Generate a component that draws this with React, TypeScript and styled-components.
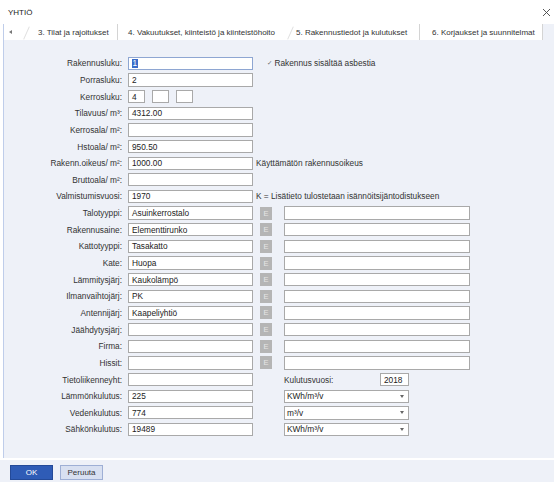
import React from 'react';
import styled, { createGlobalStyle } from 'styled-components';

const Global = createGlobalStyle`
  html, body { margin: 0; padding: 0; background: #ffffff; }
  body { font-family: "Liberation Sans", Arial, sans-serif; }
  #root { width: 554px; height: 482px; }
`;

const Window = styled.div`
  width: 554px;
  height: 482px;
  display: flex;
  flex-direction: column;
  background: #ffffff;
  overflow: hidden;
  font-size: 8.3px;
  color: #333;
  font-family: "Liberation Sans", Arial, sans-serif;
`;

const TitleBar = styled.div`
  height: 24px;
  flex: none;
  box-sizing: border-box;
  display: flex;
  align-items: center;
  justify-content: space-between;
  padding: 0 3px 0 8px;
  color: #222;
  font-size: 8px;
`;

const CloseIcon = styled.svg`
  width: 9px;
  height: 9px;
`;

const Frame = styled.div`
  flex: 1;
  display: flex;
  flex-direction: column;
  margin-left: 3px;
  border-left: 1px solid #bfcdea;
`;

const TabBar = styled.div`
  height: 16px;
  flex: none;
  display: flex;
  background: #eef1f8;
`;

const TabStrip = styled.div`
  display: flex;
  background: #ffffff;
`;

const ScrollArrow = styled.div`
  width: 19px;
  display: flex;
  align-items: center;
  padding-left: 5px;
  box-sizing: border-box;
  &::before {
    content: '';
    width: 0;
    height: 0;
    border-top: 2px solid transparent;
    border-bottom: 2px solid transparent;
    border-right: 3px solid #777;
  }
`;

const Tab = styled.div<{ $w: number; $pad: number; $slant?: boolean; $divider?: boolean }>`
  position: relative;
  width: ${(p) => p.$w}px;
  box-sizing: border-box;
  padding-left: ${(p) => p.$pad}px;
  display: flex;
  align-items: center;
  font-size: 8px;
  color: #333;
  white-space: nowrap;
  border-right: ${(p) => (p.$divider ? '1px solid #d4d4d4' : 'none')};
  &::before {
    content: '';
    display: ${(p) => (p.$slant ? 'block' : 'none')};
    position: absolute;
    left: 3px;
    top: 2px;
    width: 1px;
    height: 14px;
    background: #e0e0e0;
    transform: rotate(24deg);
    transform-origin: center;
  }
`;

const Content = styled.div`
  flex: 1;
  background: #eef1f8;
  padding-top: 16.7px;
  display: flex;
  flex-direction: column;
  gap: 3.35px;
`;

const Row = styled.div`
  display: grid;
  grid-template-columns: 118px 125px 1fr;
  column-gap: 6px;
  height: 13.3px;
  align-items: center;
`;

const Label = styled.div`
  text-align: right;
  white-space: nowrap;
  color: #333;
`;

const Field = styled.div<{ $w?: number; $focus?: boolean }>`
  width: ${(p) => (p.$w ? `${p.$w}px` : '100%')};
  height: 13.3px;
  box-sizing: border-box;
  background: #ffffff;
  border: 1px solid ${(p) => (p.$focus ? '#8ea6d2' : '#a9a9a9')};
  padding: 0 3px;
  display: flex;
  align-items: center;
  color: #222;
  white-space: nowrap;
  overflow: hidden;
`;

const Selected = styled.span`
  background: #3a6cc9;
  color: #ffffff;
  padding: 0 0.5px;
  line-height: 9px;
`;

const BoxGroup = styled.div`
  display: flex;
  gap: 7px;
`;

const Side = styled.div<{ $indent: number }>`
  display: flex;
  align-items: center;
  margin-left: ${(p) => p.$indent}px;
  white-space: nowrap;
  height: 100%;
`;

const CheckMark = styled.span`
  color: #666;
  font-family: "DejaVu Sans", sans-serif;
  font-size: 6.5px;
  margin-right: 2px;
`;

const EButton = styled.div`
  width: 12px;
  height: 13px;
  background: #b5b5b5;
  color: #e6e6e6;
  font-size: 7.5px;
  display: flex;
  align-items: center;
  justify-content: center;
  margin-right: 12px;
  flex: none;
`;

const SideLabel = styled.div`
  width: 96px;
  color: #333;
`;

const Select = styled.div`
  width: 125px;
  height: 13.4px;
  box-sizing: border-box;
  background: #ffffff;
  border: 1px solid #a9a9a9;
  padding: 0 4px 0 2px;
  display: flex;
  align-items: center;
  justify-content: space-between;
  color: #222;
  &::after {
    content: '';
    width: 0;
    height: 0;
    border-left: 2.5px solid transparent;
    border-right: 2.5px solid transparent;
    border-top: 3px solid #666;
  }
`;

const Footer = styled.div`
  height: 24px;
  flex: none;
  box-sizing: border-box;
  background: #eef1f8;
  border-top: 2px solid #ffffff;
  padding: 5px 0 0 10px;
  display: flex;
  gap: 7px;
  align-items: flex-start;
`;

const Button = styled.div<{ $primary?: boolean }>`
  width: 43px;
  height: 15px;
  box-sizing: border-box;
  display: flex;
  align-items: center;
  justify-content: center;
  font-size: 8px;
  background: ${(p) => (p.$primary ? '#2f5cb6' : '#d8e0f1')};
  border: 1px solid ${(p) => (p.$primary ? '#244a98' : '#9eafd5')};
  color: ${(p) => (p.$primary ? '#ffffff' : '#333')};
`;

type Extra =
  | { kind: 'check'; text: string }
  | { kind: 'note'; text: string }
  | { kind: 'e' }
  | { kind: 'year'; label: string; value: string }
  | { kind: 'select'; value: string };

type RowData = {
  label: string;
  value?: string;
  boxes?: string[];
  focus?: boolean;
  extra?: Extra;
};

const rows: RowData[] = [
  { label: 'Rakennusluku:', value: '1', focus: true, extra: { kind: 'check', text: 'Rakennus sisältää asbestia' } },
  { label: 'Porrasluku:', value: '2' },
  { label: 'Kerrosluku:', boxes: ['4', '', ''] },
  { label: 'Tilavuus/ m³:', value: '4312.00' },
  { label: 'Kerrosala/ m²:', value: '' },
  { label: 'Hstoala/ m²:', value: '950.50' },
  { label: 'Rakenn.oikeus/ m²:', value: '1000.00', extra: { kind: 'note', text: 'Käyttämätön rakennusoikeus' } },
  { label: 'Bruttoala/ m²:', value: '' },
  { label: 'Valmistumisvuosi:', value: '1970', extra: { kind: 'note', text: 'K = Lisätieto tulostetaan isännöitsijäntodistukseen' } },
  { label: 'Talotyyppi:', value: 'Asuinkerrostalo', extra: { kind: 'e' } },
  { label: 'Rakennusaine:', value: 'Elementtirunko', extra: { kind: 'e' } },
  { label: 'Kattotyyppi:', value: 'Tasakatto', extra: { kind: 'e' } },
  { label: 'Kate:', value: 'Huopa', extra: { kind: 'e' } },
  { label: 'Lämmitysjärj:', value: 'Kaukolämpö', extra: { kind: 'e' } },
  { label: 'Ilmanvaihtojärj:', value: 'PK', extra: { kind: 'e' } },
  { label: 'Antennijärj:', value: 'Kaapeliyhtiö', extra: { kind: 'e' } },
  { label: 'Jäähdytysjärj:', value: '', extra: { kind: 'e' } },
  { label: 'Firma:', value: '', extra: { kind: 'e' } },
  { label: 'Hissit:', value: '', extra: { kind: 'e' } },
  { label: 'Tietoliikenneyht:', value: '', extra: { kind: 'year', label: 'Kulutusvuosi:', value: '2018' } },
  { label: 'Lämmönkulutus:', value: '225', extra: { kind: 'select', value: 'KWh/m³/v' } },
  { label: 'Vedenkulutus:', value: '774', extra: { kind: 'select', value: 'm³/v' } },
  { label: 'Sähkönkulutus:', value: '19489', extra: { kind: 'select', value: 'KWh/m³/v' } },
];

function renderExtra(extra?: Extra) {
  if (!extra) return <div />;
  switch (extra.kind) {
    case 'check':
      return (
        <Side $indent={8}>
          <CheckMark>✓</CheckMark>
          {extra.text}
        </Side>
      );
    case 'note':
      return <Side $indent={-3}>{extra.text}</Side>;
    case 'e':
      return (
        <Side $indent={1}>
          <EButton>E</EButton>
          <Field $w={186} />
        </Side>
      );
    case 'year':
      return (
        <Side $indent={25}>
          <SideLabel>{extra.label}</SideLabel>
          <Field $w={29}>{extra.value}</Field>
        </Side>
      );
    case 'select':
      return (
        <Side $indent={25}>
          <Select>{extra.value}</Select>
        </Side>
      );
  }
}

const tabs = [
  { text: '3. Tilat ja rajoitukset', w: 95, pad: 15, slant: true, divider: true },
  { text: '4. Vakuutukset, kiinteistö ja kiinteistöhoito', w: 169, pad: 10, slant: false, divider: false },
  { text: '5. Rakennustiedot ja kulutukset', w: 133, pad: 9, slant: true, divider: true },
  { text: '6. Korjaukset ja suunnitelmat', w: 123, pad: 12, slant: false, divider: true },
];

export default function App() {
  return (
    <>
      <Global />
      <Window>
        <TitleBar>
          <span>YHTIÖ</span>
          <CloseIcon viewBox="0 0 9 9">
            <path d="M1 1 L8 8 M8 1 L1 8" stroke="#444" strokeWidth="0.9" fill="none" />
          </CloseIcon>
        </TitleBar>
        <Frame>
          <TabBar>
            <TabStrip>
              <ScrollArrow />
              {tabs.map((t) => (
                <Tab key={t.text} $w={t.w} $pad={t.pad} $slant={t.slant} $divider={t.divider}>
                  {t.text}
                </Tab>
              ))}
            </TabStrip>
          </TabBar>
          <Content>
            {rows.map((r) => (
              <Row key={r.label}>
                <Label>{r.label}</Label>
                {r.boxes ? (
                  <BoxGroup>
                    {r.boxes.map((b, i) => (
                      <Field key={i} $w={17}>
                        {b}
                      </Field>
                    ))}
                  </BoxGroup>
                ) : (
                  <Field $focus={r.focus}>
                    {r.focus ? <Selected>{r.value}</Selected> : r.value}
                  </Field>
                )}
                {renderExtra(r.extra)}
              </Row>
            ))}
          </Content>
        </Frame>
        <Footer>
          <Button $primary>OK</Button>
          <Button>Peruuta</Button>
        </Footer>
      </Window>
    </>
  );
}
